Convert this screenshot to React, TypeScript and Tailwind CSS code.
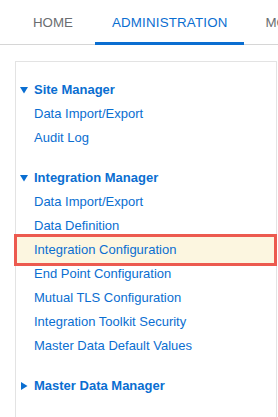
const blue = "text-[#0a6ed1]";

function Caret({ open }: { open: boolean }) {
  return (
    <svg width="8" height="8" viewBox="0 0 8 8" className="absolute left-[4px] top-[8px]">
      {open ? <polygon points="0,1 8,1 4,7.5" fill="#0a6ed1" /> : <polygon points="1,0 7.5,4 1,8" fill="#0a6ed1" />}
    </svg>
  );
}

function SectionTitle({ label, open }: { label: string; open: boolean }) {
  return (
    <div className={`relative h-6 flex items-center pl-[18px] text-[13px] font-bold ${blue}`}>
      <Caret open={open} />
      {label}
    </div>
  );
}

function Item({ label }: { label: string }) {
  return <div className={`h-6 flex items-center pl-[18px] text-[13px] ${blue}`}>{label}</div>;
}

export default function App() {
  const site = ["Data Import/Export", "Audit Log"];
  const integration = [
    "Data Import/Export",
    "Data Definition",
    "Integration Configuration",
    "End Point Configuration",
    "Mutual TLS Configuration",
    "Integration Toolkit Security",
    "Master Data Default Values",
  ];

  return (
    <div className="w-[278px] h-[417px] overflow-hidden bg-white font-['Liberation_Sans',Arial,sans-serif]">
      <div className="h-[45px] border-b border-[#d6d6d6] flex whitespace-nowrap text-[13.3px]">
        <div className="pl-[33px] pr-[22px] flex items-center text-[#6a6d70] pt-[1px]">HOME</div>
        <div className="px-[17px] flex items-center text-[#0a6ed1] border-b-[3px] border-[#0a6ed1] mb-[-1px] pt-[4px] tracking-[0.2px]">
          ADMINISTRATION
        </div>
        <div className="pl-[21px] flex items-center text-[#6a6d70] pt-[1px]">MORE</div>
      </div>
      <div className="pl-[15px] pt-[16px]">
        <div className="w-[262px] h-[400px] border border-[#e3e3e3] pt-[16px] pr-[8px]">
          <SectionTitle label="Site Manager" open />
          {site.map((s) => (
            <Item key={s} label={s} />
          ))}
          <div className="h-4" />
          <SectionTitle label="Integration Manager" open />
          {integration.map((s) =>
            s === "Integration Configuration" ? (
              <div
                key={s}
                className={`relative z-10 -ml-[2px] -mr-[9px] -my-[4px] h-[32px] border-[3px] border-[#ec5a4f] bg-[#fcf6e0] flex items-center pl-[17px] text-[13px] ${blue}`}
              >
                {s}
              </div>
            ) : (
              <Item key={s} label={s} />
            )
          )}
          <div className="h-4" />
          <SectionTitle label="Master Data Manager" open={false} />
        </div>
      </div>
    </div>
  );
}
